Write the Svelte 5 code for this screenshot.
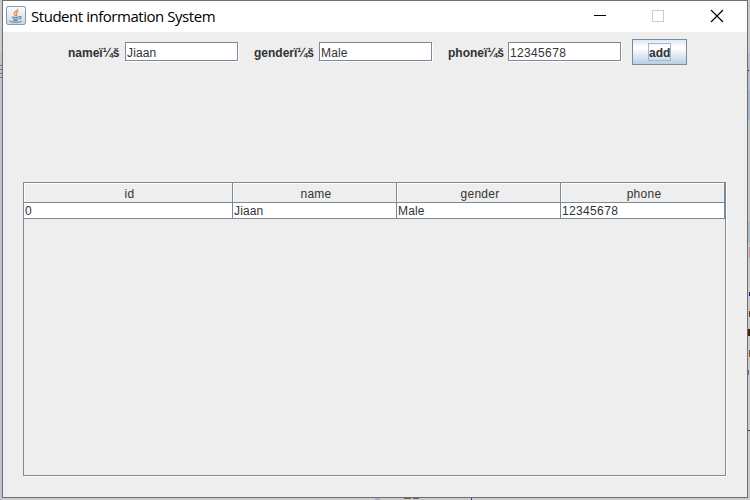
<script>
  const fields = [
    { label: 'nameï¼š', value: 'Jiaan', width: 52 },
    { label: 'genderï¼š', value: 'Male', width: 60 },
    { label: 'phoneï¼š', value: '12345678', width: 55 }
  ];
  const columns = ['id', 'name', 'gender', 'phone'];
  const rows = [['0', 'Jiaan', 'Male', '12345678']];
  const isNumber = (v) => /^\d+$/.test(v);
  const behind = [
    { x: 748, y: 53, w: 2, h: 37, c: '#b9bbcf' },
    { x: 748, y: 90, w: 2, h: 30, c: '#aab8c7' },
    { x: 748, y: 70, w: 1, h: 1, c: '#151515' },
    { x: 748, y: 120, w: 2, h: 102, c: '#c5c5c8' },
    { x: 748, y: 222, w: 2, h: 20, c: '#aeb9c7' },
    { x: 749, y: 247, w: 1, h: 11, c: '#d18fa8' },
    { x: 749, y: 292, w: 1, h: 4, c: '#35108a' },
    { x: 749, y: 311, w: 1, h: 6, c: '#7a3b09' },
    { x: 748, y: 329, w: 2, h: 7, c: '#3c250f' },
    { x: 749, y: 350, w: 1, h: 7, c: '#8c4710' },
    { x: 748, y: 370, w: 1, h: 5, c: '#66729b' },
    { x: 748, y: 430, w: 2, h: 1, c: '#513710' },
    { x: 0, y: 53, w: 2, h: 447, c: '#bfc2d0' },
    { x: 0, y: 65, w: 2, h: 1, c: '#777785' },
    { x: 0, y: 69, w: 2, h: 1, c: '#777785' },
    { x: 0, y: 73, w: 2, h: 1, c: '#777785' },
    { x: 0, y: 77, w: 2, h: 1, c: '#777785' },
    { x: 375, y: 498, w: 5, h: 2, c: '#aeb0c2' },
    { x: 404, y: 498, w: 7, h: 1, c: '#706252' },
    { x: 413, y: 498, w: 6, h: 1, c: '#65615b' },
    { x: 471, y: 498, w: 1, h: 2, c: '#30379a' }
  ];
</script>

<div class="desktop">
  <svg class="behind" width="750" height="500" shape-rendering="crispEdges" aria-hidden="true">
    {#each behind as b}
      <rect x={b.x} y={b.y} width={b.w} height={b.h} fill={b.c} />
    {/each}
  </svg>
  <main class="window">
    <header>
      <svg class="java" width="20" height="20" viewBox="0 0 20 20" aria-hidden="true">
        <defs>
          <linearGradient id="tile" x1="0" y1="0" x2="0" y2="1">
            <stop offset="0" stop-color="#fafbfc" />
            <stop offset=".5" stop-color="#e6ebef" />
            <stop offset="1" stop-color="#c8d5df" />
          </linearGradient>
        </defs>
        <rect x=".5" y=".5" width="19" height="18" rx="1.8" fill="url(#tile)" stroke="#8299ad" />
        <path d="M11.7 2.8C12 5 7.8 5.6 8.2 7.6c.2 1 1.3 1.4 1.2 2.6M12.6 5.5c-2 .8-2.8 1.7-2.1 2.7.5.7.3 1.4-.3 2" fill="none" stroke="#e9853a" stroke-width="1.2" />
        <path d="M6 10.8c1.8.7 5 .7 7 0M6.8 12.6c1.5.7 4 .7 5.6 0M7.4 14.2c1.3.5 3.2.5 4.4 0M13 10.7c2.8-.8 2.9 1.6.2 2.4M4.2 14.7c-1.2 2 9.5 2.1 11.3.4" fill="none" stroke="#5585a6" stroke-width="1.1" />
      </svg>
      <h1>Student information System</h1>
      <svg class="controls" width="140" height="31" viewBox="0 0 140 31" aria-hidden="true">
        <path d="M1 14.5h12" stroke="#000" shape-rendering="crispEdges" />
        <rect x="59.5" y="9.5" width="11" height="11" fill="none" stroke="#ccc" />
        <path d="M118 9l12 12M130 9l-12 12" stroke="#000" stroke-width="1.15" />
      </svg>
    </header>
    <form onsubmit={(e) => e.preventDefault()}>
      {#each fields as f}
        <label>
          <span style:width="{f.width}px">{f.label}</span>
          <input type="text" class:number={isNumber(f.value)} value={f.value} />
        </label>
      {/each}
      <button type="submit"><span>add</span></button>
    </form>
    <section class="scroll">
      <div class="line head">
        {#each columns as c}<div>{c}</div>{/each}
      </div>
      {#each rows as r}
        <div class="line row">
          {#each r as v}<div class:number={isNumber(v)}>{v}</div>{/each}
        </div>
      {/each}
    </section>
  </main>
</div>

<style>
  :global(body) { margin: 0; overflow: hidden; }
  .desktop {
    position: relative;
    box-sizing: border-box;
    width: 750px;
    height: 500px;
    padding-left: 2px;
    background: #c9cac9;
    font: 12px "Liberation Sans", Arial, sans-serif;
    color: #333;
  }
  .behind { position: absolute; left: 0; top: 0; }
  .window {
    position: relative;
    box-sizing: border-box;
    width: 746px;
    height: 498px;
    border: 1px solid #6f6f6f;
    background: #eee;
  }
  header { display: flex; height: 31px; background: #fff; }
  .java { flex: none; margin: 5px 0 0 3px; }
  h1 {
    margin: 0 0 0 5px;
    width: 562px;
    font: 15px/31px "Open Sans", "Noto Sans", sans-serif;
    letter-spacing: -0.46px;
    color: #000;
    white-space: nowrap;
  }
  .controls { flex: none; }
  form { display: flex; padding: 7px 0 0 65px; height: 26px; }
  label { display: flex; margin-right: 15px; }
  label span {
    margin: 7px 5px 0 0;
    font-weight: bold;
    line-height: 14px;
    white-space: nowrap;
  }
  input {
    box-sizing: border-box;
    width: 113px;
    height: 19px;
    margin: 3px 1px 0 0;
    padding: 2px 0 0 1px;
    border: 1px solid #7a8a99;
    border-radius: 0;
    outline: 0;
    background: #fff;
    box-shadow: 1px 1px #fff;
    font: inherit;
    letter-spacing: 0.15px;
    color: #333;
  }
  button {
    display: flex;
    justify-content: center;
    box-sizing: border-box;
    width: 55px;
    height: 26px;
    margin-left: -5px;
    padding: 3px 0 0;
    border: 1px solid #7a8a99;
    border-radius: 0;
    background: linear-gradient(#dde8f3, #fff 30%, #fff 35%, #b8cfe5);
    font: bold 12px "Liberation Sans", Arial, sans-serif;
    color: #333;
  }
  button span {
    box-sizing: border-box;
    width: 23px;
    height: 18px;
    border: 1px solid #a3b8cc;
    line-height: 18px;
  }
  .scroll {
    box-sizing: border-box;
    width: 703px;
    height: 294px;
    margin: 117px 0 0 20px;
    border: 1px solid #7a8a99;
    box-shadow: 1px 1px #fff;
  }
  .line {
    display: grid;
    grid-template-columns: 209px 164px 164px 164px;
  }
  .line div {
    box-sizing: border-box;
    border: solid #7a8a99;
    border-width: 0 1px 1px 0;
  }
  .head div {
    height: 20px;
    line-height: 22px;
    text-align: center;
    padding-left: 3px;
    letter-spacing: 0.25px;
    box-shadow: inset 1px 1px #fff;
  }
  .row div {
    height: 16px;
    padding-left: 1px;
    line-height: 16px;
    letter-spacing: 0.15px;
    background: #fff;
  }
  input.number, .row .number { letter-spacing: 0.35px; }
</style>
